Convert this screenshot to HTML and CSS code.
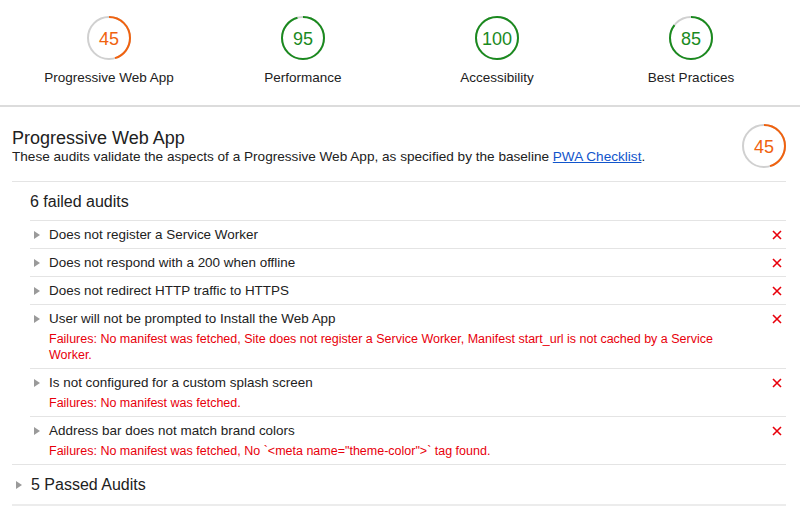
FILE: index.html
```html
<!DOCTYPE html>
<html>
<head>
<meta charset="utf-8">
<link rel="stylesheet" href="styles.css">
</head>
<body>
<header class="scores">
  <div class="score">
    <svg class="gauge" viewBox="0 0 44 44"><circle class="track" cx="22" cy="22" r="21"/><circle class="arc avg" cx="22" cy="22" r="21" stroke-dasharray="59.4 200"/><text x="22" y="28.5" class="num avg-t">45</text></svg>
    <div class="label">Progressive Web App</div>
  </div>
  <div class="score">
    <svg class="gauge" viewBox="0 0 44 44"><circle class="track" cx="22" cy="22" r="21"/><circle class="arc pass" cx="22" cy="22" r="21" stroke-dasharray="125.4 200"/><text x="22" y="28.5" class="num pass-t">95</text></svg>
    <div class="label">Performance</div>
  </div>
  <div class="score">
    <svg class="gauge" viewBox="0 0 44 44"><circle class="track" cx="22" cy="22" r="21"/><circle class="arc pass" cx="22" cy="22" r="21" stroke-dasharray="132 200"/><text x="22" y="28.5" class="num pass-t">100</text></svg>
    <div class="label">Accessibility</div>
  </div>
  <div class="score">
    <svg class="gauge" viewBox="0 0 44 44"><circle class="track" cx="22" cy="22" r="21"/><circle class="arc pass" cx="22" cy="22" r="21" stroke-dasharray="112.2 200"/><text x="22" y="28.5" class="num pass-t">85</text></svg>
    <div class="label">Best Practices</div>
  </div>
</header>

<section class="category">
  <div class="cat-head">
    <div class="cat-text">
      <h1 class="cat-title">Progressive Web App</h1>
      <p class="cat-desc">These audits validate the aspects of a Progressive Web App, as specified by the baseline <a href="#" class="link">PWA Checklist</a>.</p>
    </div>
    <svg class="gauge" viewBox="0 0 44 44"><circle class="track" cx="22" cy="22" r="21"/><circle class="arc avg" cx="22" cy="22" r="21" stroke-dasharray="59.4 200"/><text x="22" y="28.5" class="num avg-t">45</text></svg>
  </div>

  <div class="group">
    <div class="group-title">6 failed audits</div>
    <div class="audit">
      <span class="arrow"></span>
      <div class="audit-body"><div class="audit-title">Does not register a Service Worker</div></div>
      <svg class="x" viewBox="0 0 10 10"><path d="M1 1L9 9M9 1L1 9"/></svg>
    </div>
    <div class="audit">
      <span class="arrow"></span>
      <div class="audit-body"><div class="audit-title">Does not respond with a 200 when offline</div></div>
      <svg class="x" viewBox="0 0 10 10"><path d="M1 1L9 9M9 1L1 9"/></svg>
    </div>
    <div class="audit">
      <span class="arrow"></span>
      <div class="audit-body"><div class="audit-title">Does not redirect HTTP traffic to HTTPS</div></div>
      <svg class="x" viewBox="0 0 10 10"><path d="M1 1L9 9M9 1L1 9"/></svg>
    </div>
    <div class="audit">
      <span class="arrow"></span>
      <div class="audit-body"><div class="audit-title">User will not be prompted to Install the Web App</div><div class="failure">Failures: No manifest was fetched, Site does not register a Service Worker, Manifest start_url is not cached by a Service Worker.</div></div>
      <svg class="x" viewBox="0 0 10 10"><path d="M1 1L9 9M9 1L1 9"/></svg>
    </div>
    <div class="audit">
      <span class="arrow"></span>
      <div class="audit-body"><div class="audit-title">Is not configured for a custom splash screen</div><div class="failure">Failures: No manifest was fetched.</div></div>
      <svg class="x" viewBox="0 0 10 10"><path d="M1 1L9 9M9 1L1 9"/></svg>
    </div>
    <div class="audit">
      <span class="arrow"></span>
      <div class="audit-body"><div class="audit-title">Address bar does not match brand colors</div><div class="failure">Failures: No manifest was fetched, No `&lt;meta name="theme-color"&gt;` tag found.</div></div>
      <svg class="x" viewBox="0 0 10 10"><path d="M1 1L9 9M9 1L1 9"/></svg>
    </div>
  </div>

  <div class="passed">
    <span class="arrow"></span>
    <span>5 Passed Audits</span>
  </div>
</section>
</body>
</html>
```

FILE: styles.css
```css
* { box-sizing: border-box; }
body {
  margin: 0;
  font-family: "Liberation Sans", Arial, sans-serif;
  color: #212121;
  background: #fff;
}
.scores {
  display: grid;
  grid-template-columns: repeat(4, 194px);
  padding: 16px 12px 0;
  height: 107px;
  border-bottom: 2px solid #dcdcdc;
}
.score {
  display: flex;
  flex-direction: column;
  align-items: center;
}
.gauge {
  width: 44px;
  height: 44px;
  flex: none;
}
.track {
  fill: none;
  stroke: #d0d0d0;
  stroke-width: 2;
}
.arc {
  fill: none;
  stroke-width: 2;
  transform: rotate(-90deg);
  transform-origin: 22px 22px;
}
.avg { stroke: #f0620f; }
.pass { stroke: #1a8a1e; }
.num {
  font-size: 18px;
  text-anchor: middle;
  font-family: "Liberation Sans", Arial, sans-serif;
}
.avg-t { fill: #f0620f; }
.pass-t { fill: #1a8a1e; }
.label {
  margin-top: 10px;
  font-size: 13.5px;
  line-height: 16px;
  color: #212121;
}
.category {
  padding: 0 14px 0 12px;
}
.cat-head {
  display: flex;
  justify-content: space-between;
  align-items: center;
  padding: 17px 0 13px;
  border-bottom: 1px solid #e4e4e4;
}
.cat-title {
  margin: 0;
  font-size: 18px;
  font-weight: normal;
  line-height: 22px;
}
.cat-desc {
  margin: 0;
  font-size: 13.6px;
  line-height: 16px;
}
.link { color: #1155cc; }
.group {
  padding-left: 18px;
}
.group-title {
  font-size: 16px;
  line-height: 18px;
  padding: 11px 0 9px;
  border-bottom: 1px solid #e4e4e4;
}
.audit {
  display: flex;
  align-items: flex-start;
  padding: 6px 0 5px;
  border-bottom: 1px solid #e4e4e4;
}
.audit:last-child {
  margin-left: -18px;
  padding-left: 18px;
}
.arrow {
  flex: none;
  width: 0;
  height: 0;
  margin: 4px 9px 0 4px;
  border-left: 6px solid #9a9a9a;
  border-top: 4px solid transparent;
  border-bottom: 4px solid transparent;
}
.audit-body {
  flex: 1;
  padding-right: 40px;
}
.audit-title {
  font-size: 13.45px;
  line-height: 16px;
}
.failure {
  margin-top: 4px;
  font-size: 12.5px;
  line-height: 16px;
  color: #e8000b;
}
.x {
  flex: none;
  width: 10px;
  height: 10px;
  margin: 3px 4px 0 0;
  fill: none;
  stroke: #e8000b;
  stroke-width: 1.6;
}
.passed {
  display: flex;
  align-items: center;
  padding: 11px 0 10px;
  font-size: 16px;
  line-height: 18px;
  border-bottom: 2px solid #ececec;
}
.passed .arrow {
  margin: 0 9px 0 4px;
}
```
